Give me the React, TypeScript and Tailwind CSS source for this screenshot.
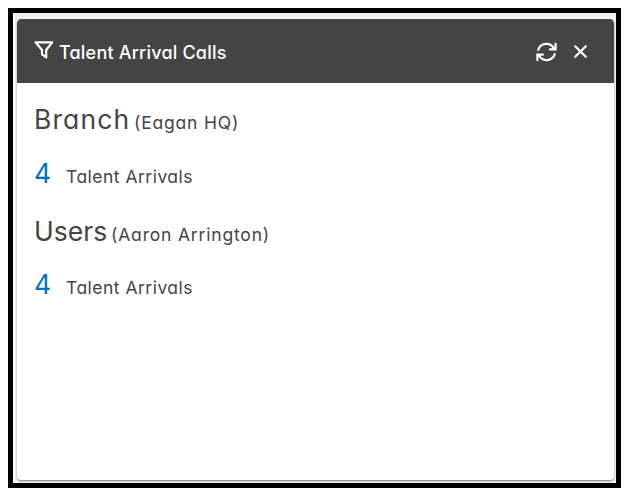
import React from "react";

const FilterIcon: React.FC = () => (
  <svg
    className="w-5 h-[18px] shrink-0"
    viewBox="0 0 20 18"
    fill="none"
    stroke="currentColor"
    strokeWidth="2.2"
    strokeLinejoin="round"
  >
    <path d="M1.6 1.4H18.2L12.2 9V16.4L8 13.4V9Z" />
  </svg>
);

const RefreshIcon: React.FC = () => (
  <svg
    className="w-[21px] h-5"
    viewBox="0 0 21 20"
    fill="none"
    stroke="currentColor"
    strokeWidth="2.2"
    strokeLinecap="round"
  >
    <path d="M2.2 7.8A8.6 8.6 0 0 1 17.8 6.2M19.6 1.8V7.4H14" />
    <path d="M18.8 12.2A8.6 8.6 0 0 1 3.2 13.8M1.4 18.2V12.6H7" />
  </svg>
);

const CloseIcon: React.FC = () => (
  <svg
    className="w-[13px] h-[13px]"
    viewBox="0 0 13 13"
    fill="none"
    stroke="currentColor"
    strokeWidth="2.2"
    strokeLinecap="round"
  >
    <path d="M1.2 1.2L11.8 11.8M11.8 1.2L1.2 11.8" />
  </svg>
);

const App: React.FC = () => {
  return (
    <div className="w-[627px] h-[491px] bg-white pt-2 pl-2 font-['Inter',sans-serif] [font-feature-settings:'cv11']">
      <div className="w-[613px] h-[480px] border-5 border-black bg-[#f0f0f0] border-solid">
        <div className="h-full border-l-2 border-white pt-1.5 pl-px">
          <section className="w-[599px] h-[462px] rounded-[5px] overflow-hidden bg-white border-x border-b border-x-[#d8d8d8] border-b-[#999999] shadow-[0_1px_1px_#cccccc]">
            <header className="h-16 bg-[#444444] text-white flex items-center pl-[17px] pr-[27px]">
              <div className="flex items-center gap-[5px] grow">
                <div className="pb-[3px]">
                  <FilterIcon />
                </div>
                <h1 className="text-[18px] leading-7 font-medium tracking-[0.2px] pt-1 whitespace-nowrap">
                  Talent Arrival Calls
                </h1>
              </div>
              <div className="flex items-center gap-[17px] pt-px">
                <button aria-label="Refresh">
                  <RefreshIcon />
                </button>
                <button aria-label="Close">
                  <CloseIcon />
                </button>
              </div>
            </header>
            <div className="pl-[17px] pt-[21px] text-[#444444] text-[17.5px] whitespace-nowrap">
              <h2 className="flex items-baseline h-[54px] leading-[30px]">
                <span className="text-[26.5px] w-[100px] tracking-[1.1px]">Branch</span>
                <span className="tracking-[0.8px]">(Eagan HQ)</span>
              </h2>
              <p className="flex items-baseline h-[58px] leading-[30px]">
                <a className="text-[26.5px] text-[#0072c6] w-8">4</a>
                <span className="tracking-[0.48px]">Talent Arrivals</span>
              </p>
              <h2 className="flex items-baseline h-[53px] leading-[30px]">
                <span className="text-[26.5px] w-[77px]">Users</span>
                <span className="tracking-[0.82px]">(Aaron Arrington)</span>
              </h2>
              <p className="flex items-baseline leading-[30px]">
                <a className="text-[26.5px] text-[#0072c6] w-8">4</a>
                <span className="tracking-[0.48px]">Talent Arrivals</span>
              </p>
            </div>
          </section>
        </div>
      </div>
    </div>
  );
};

export default App;
